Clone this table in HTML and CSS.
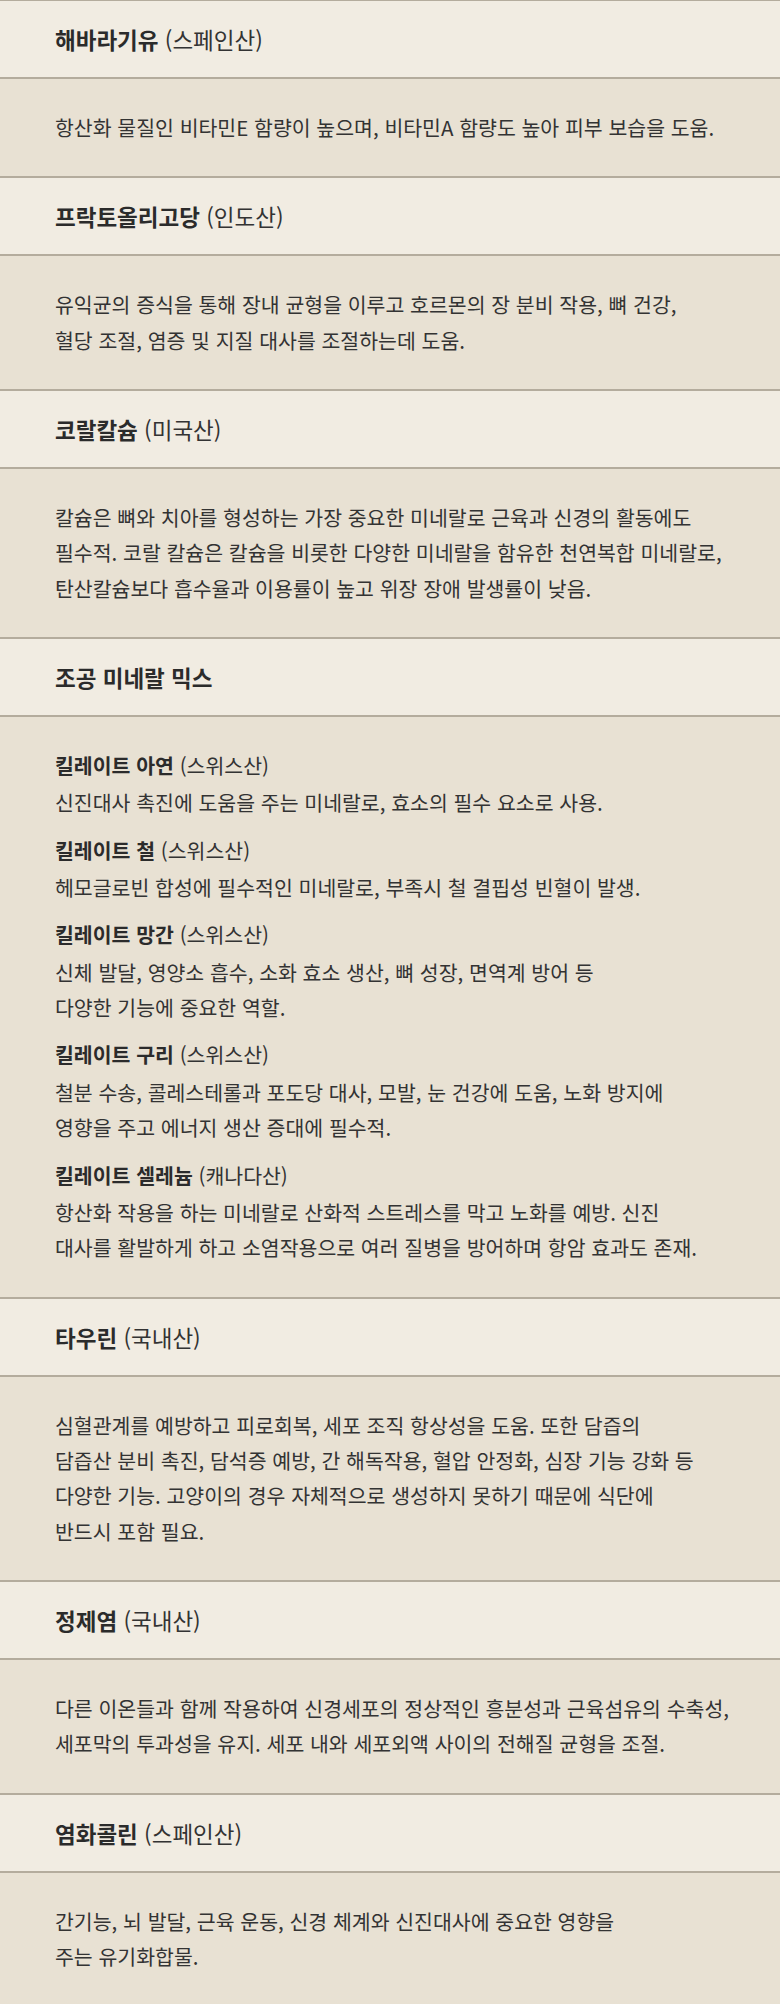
FILE: index.html
```html
<!DOCTYPE html>
<html lang="ko">
<head>
  <meta charset="UTF-8" />
  <meta name="viewport" content="width=device-width, initial-scale=1.0"/>
  <title>원료 정보</title>
  <link rel="stylesheet" href="styles.css">
</head>
<body>
  <div class="ingredients">
    <div class="ing-head"><b>해바라기유</b> (스페인산)</div>
    <div class="ing-body">
      항산화 물질인 비타민E 함량이 높으며, 비타민A 함량도 높아 피부 보습을 도움.
    </div>

    <div class="ing-head"><b>프락토올리고당</b> (인도산)</div>
    <div class="ing-body">
      유익균의 증식을 통해 장내 균형을 이루고 호르몬의 장 분비 작용, 뼈 건강,<br>
      혈당 조절, 염증 및 지질 대사를 조절하는데 도움.
    </div>

    <div class="ing-head"><b>코랄칼슘</b> (미국산)</div>
    <div class="ing-body">
      칼슘은 뼈와 치아를 형성하는 가장 중요한 미네랄로 근육과 신경의 활동에도<br>
      필수적. 코랄 칼슘은 칼슘을 비롯한 다양한 미네랄을 함유한 천연복합 미네랄로,<br>
      탄산칼슘보다 흡수율과 이용률이 높고 위장 장애 발생률이 낮음.
    </div>

    <div class="ing-head"><b>조공 미네랄 믹스</b></div>
    <div class="ing-body mix">
      <div class="mix-item">
        <div class="mix-title"><b>킬레이트 아연</b> (스위스산)</div>
        <p>신진대사 촉진에 도움을 주는 미네랄로, 효소의 필수 요소로 사용.</p>
      </div>
      <div class="mix-item">
        <div class="mix-title"><b>킬레이트 철</b> (스위스산)</div>
        <p>헤모글로빈 합성에 필수적인 미네랄로, 부족시 철 결핍성 빈혈이 발생.</p>
      </div>
      <div class="mix-item">
        <div class="mix-title"><b>킬레이트 망간</b> (스위스산)</div>
        <p>신체 발달, 영양소 흡수, 소화 효소 생산, 뼈 성장, 면역계 방어 등<br>
        다양한 기능에 중요한 역할.</p>
      </div>
      <div class="mix-item">
        <div class="mix-title"><b>킬레이트 구리</b> (스위스산)</div>
        <p>철분 수송, 콜레스테롤과 포도당 대사, 모발, 눈 건강에 도움, 노화 방지에<br>
        영향을 주고 에너지 생산 증대에 필수적.</p>
      </div>
      <div class="mix-item">
        <div class="mix-title"><b>킬레이트 셀레늄</b> (캐나다산)</div>
        <p>항산화 작용을 하는 미네랄로 산화적 스트레스를 막고 노화를 예방. 신진<br>
        대사를 활발하게 하고 소염작용으로 여러 질병을 방어하며 항암 효과도 존재.</p>
      </div>
    </div>

    <div class="ing-head"><b>타우린</b> (국내산)</div>
    <div class="ing-body">
      심혈관계를 예방하고 피로회복, 세포 조직 항상성을 도움. 또한 담즙의<br>
      담즙산 분비 촉진, 담석증 예방, 간 해독작용, 혈압 안정화, 심장 기능 강화 등<br>
      다양한 기능. 고양이의 경우 자체적으로 생성하지 못하기 때문에 식단에<br>
      반드시 포함 필요.
    </div>

    <div class="ing-head"><b>정제염</b> (국내산)</div>
    <div class="ing-body">
      다른 이온들과 함께 작용하여 신경세포의 정상적인 흥분성과 근육섬유의 수축성,<br>
      세포막의 투과성을 유지. 세포 내와 세포외액 사이의 전해질 균형을 조절.
    </div>

    <div class="ing-head"><b>염화콜린</b> (스페인산)</div>
    <div class="ing-body">
      간기능, 뇌 발달, 근육 운동, 신경 체계와 신진대사에 중요한 영향을<br>
      주는 유기화합물.
    </div>
  </div>
</body>
</html>
```

FILE: styles.css
```css
body {
  margin: 0;
  font-family: "Noto Sans CJK KR", "Noto Sans", sans-serif;
  color: #333;
  background-color: #e8e1d3;
}

.ingredients {
  border-top: 1px solid #b4ac9d;
}

.ing-head {
  background-color: #f1ece2;
  padding: 21px 55px 20px;
  font-size: 22.5px;
  line-height: 35px;
  border-bottom: 2px solid #b4ac9d;
}

.ing-head b {
  font-weight: 700;
  color: #2b2b2b;
}

/* line breaks are set by hand with <br> */
.ing-body {
  background-color: #e8e1d3;
  padding: 31px 20px 31px 55px;
  font-size: 20.5px;
  line-height: 35.34px;
  white-space: nowrap;
  border-bottom: 2px solid #b4ac9d;
}

.mix {
  display: flex;
  flex-direction: column;
  gap: 12px;
}

.mix-title {
  margin-bottom: 2px;
}

.mix-title b {
  font-weight: 700;
  color: #2b2b2b;
}

.mix-item p {
  margin: 0;
}
```
